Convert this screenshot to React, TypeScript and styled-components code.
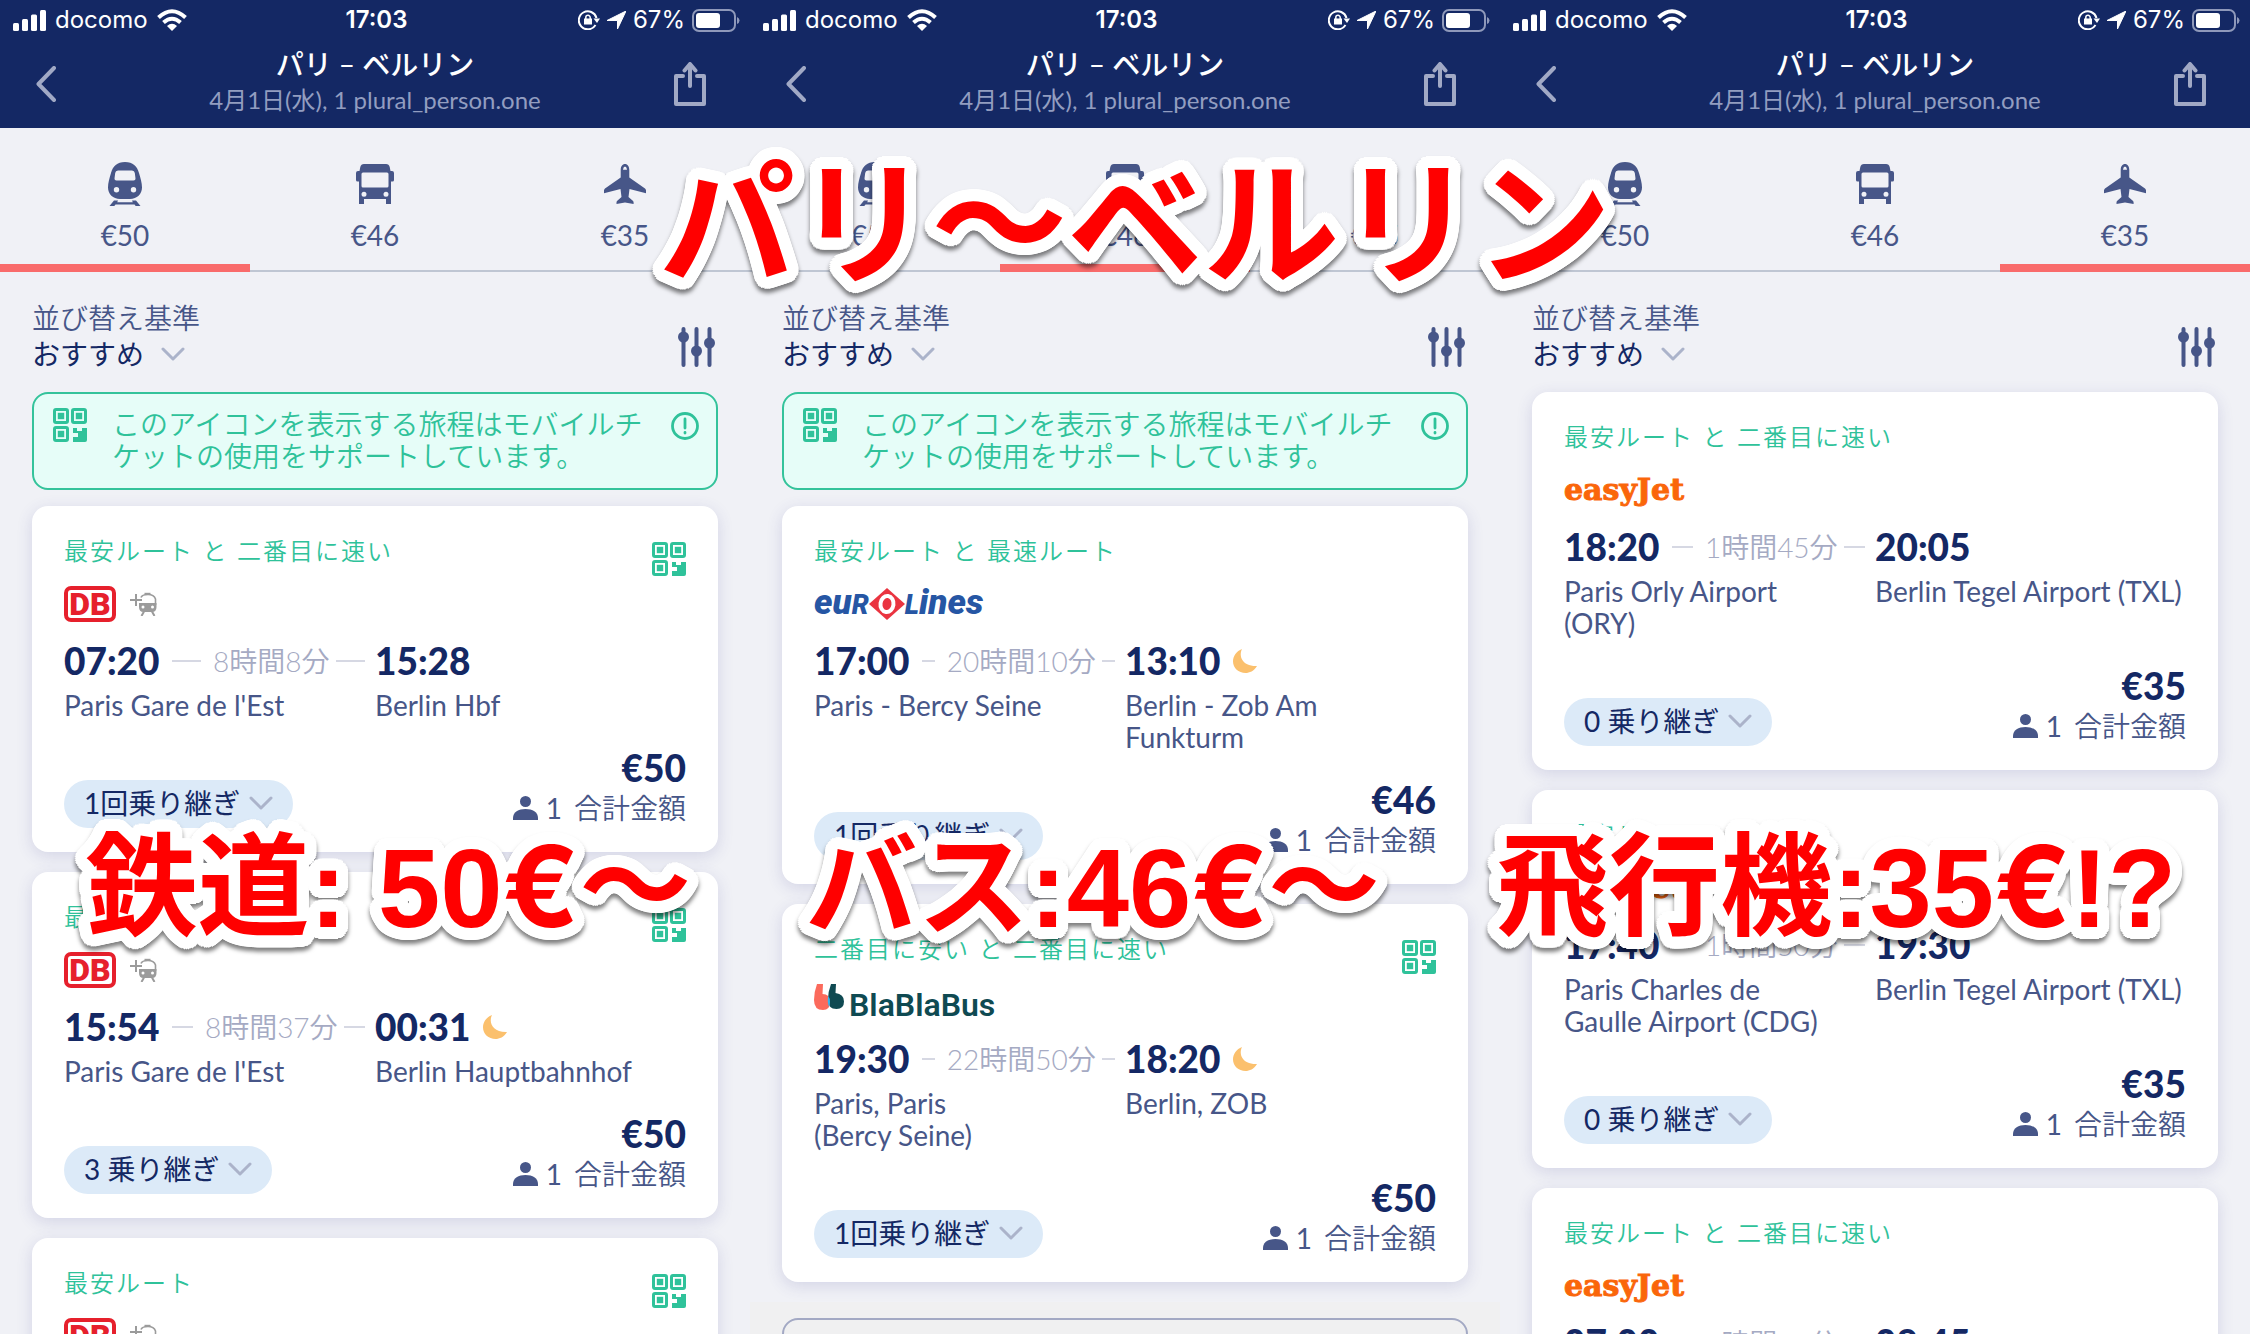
import React, { useId } from 'react';
import styled, { createGlobalStyle } from 'styled-components';

const color = {
  navy: '#142864',
  ink: '#475688',
  muted: '#a5aac3',
  green: '#2fc29a',
  page: '#f0f1f6',
  coral: '#f96b6b',
};

const GlobalStyle = createGlobalStyle`
  * { box-sizing: border-box; }
  body { margin: 0; }
  button, select { font: inherit; color: inherit; background: none; border: 0; padding: 0; margin: 0; }
  svg { display: block; flex: none; }
`;

const Page = styled.div`
  position: relative;
  display: grid;
  grid-template-columns: repeat(3, minmax(0, 1fr));
  height: 100vh;
  overflow: hidden;
  font-family: Lato, 'Noto Sans CJK JP', sans-serif;
  font-size: 28px;
  line-height: 32px;
  color: ${color.ink};
  background: ${color.page};
`;

const Phone = styled.section`
  min-width: 0;
`;

const Header = styled.header`
  height: 128px;
  color: #fff;
  background: ${color.navy};
`;

const StatusBar = styled.div`
  display: grid;
  grid-template-columns: 1fr auto 1fr;
  align-items: center;
  height: 40px;
  padding: 0 10px 0 13px;
  font-family: Inter, sans-serif;
  font-size: 24px;
`;

const StatusGroup = styled.div<{ $end?: boolean }>`
  display: flex;
  align-items: center;
  justify-content: ${(p) => (p.$end ? 'flex-end' : 'flex-start')};
  gap: ${(p) => (p.$end ? '7px' : '9px')};
`;

const Clock = styled.time`
  font-weight: 600;
`;

const NavBar = styled.div`
  display: grid;
  grid-template-columns: 120px 1fr 120px;
  align-items: center;
  height: 88px;
`;

const NavButton = styled.button<{ $back?: boolean }>`
  display: flex;
  justify-content: ${(p) => (p.$back ? 'flex-start' : 'center')};
  align-items: center;
  height: 88px;
  padding-left: ${(p) => (p.$back ? '36px' : '0')};
  color: #a1a9c5;
`;

const Titles = styled.div`
  text-align: center;
`;

const Title = styled.h1`
  margin: 0;
  font-size: 28px;
  line-height: 40px;
  font-weight: 500;
`;

const Subtitle = styled.p`
  margin: 0;
  padding-bottom: 8px;
  font-size: 24px;
  line-height: 32px;
  color: #929dc0;
`;

const Tabs = styled.nav`
  display: grid;
  grid-template-columns: repeat(3, 1fr);
  height: 144px;
  border-bottom: 2px solid #bfc6d3;
`;

const Tab = styled.button<{ $active: boolean }>`
  display: flex;
  flex-direction: column;
  align-items: center;
  gap: 13px;
  height: 144px;
  padding-top: 34px;
  border-bottom: 8px solid ${(p) => (p.$active ? color.coral : 'transparent')};
`;

const TabPrice = styled.span`
  line-height: 32px;
`;

const SortRow = styled.div`
  display: flex;
  justify-content: space-between;
  align-items: center;
  height: 120px;
  padding: 0 32px;
`;

const SortBox = styled.div`
  display: flex;
  flex-direction: column;
  padding-top: 8px;
  line-height: 36px;
`;

const SortLabel = styled.label`
  font-weight: 350;
`;

const SelectWrap = styled.span`
  display: flex;
  align-items: center;
  gap: 16px;
  color: ${color.navy};
`;

const Select = styled.select`
  appearance: none;
  height: 36px;
  line-height: 36px;
`;

const FilterButton = styled.button`
  padding: 30px 3px 0 0;
`;

const Results = styled.main`
  display: flex;
  flex-direction: column;
  gap: 20px;
  padding: 0 32px;
`;

const Notice = styled.aside`
  display: flex;
  align-items: flex-start;
  height: 98px;
  margin-bottom: -4px;
  padding: 14px 17px 0 19px;
  border: 2px solid #34c39b;
  border-radius: 16px;
  color: ${color.green};
  background: #e6fdf8;
`;

const NoticeText = styled.p`
  flex: 1;
  min-width: 0;
  margin: 0;
  padding: 0 20px 0 25px;
  font-weight: 350;
`;

const NoticeInfo = styled.button`
  padding-top: 4px;
`;

const Card = styled.article`
  padding: 28px 32px 24px;
  border-radius: 16px;
  background: #fff;
  box-shadow: 0 4px 16px rgba(60, 60, 150, 0.16);
`;

const CardHead = styled.div`
  display: flex;
  justify-content: space-between;
  align-items: flex-start;
  height: 34px;
`;

const Tag = styled.span`
  font-size: 24px;
  line-height: 34px;
  font-weight: 350;
  letter-spacing: 2px;
  color: ${color.green};
`;

const TicketMark = styled.span`
  padding-top: 8px;
`;

const Carrier = styled.div`
  display: flex;
  align-items: center;
  gap: 14px;
  height: 36px;
  margin-top: 18px;
`;

const Legs = styled.div`
  display: grid;
  grid-template-columns: 1fr 1fr;
  row-gap: 6px;
  margin-top: 17px;
`;

const TimeCell = styled.div`
  display: flex;
  align-items: center;
  gap: 6px;
  height: 44px;
  padding-right: 10px;
`;

const Time = styled.time`
  padding-right: 6px;
  font-size: 37px;
  font-weight: 900;
  color: ${color.navy};
`;

const Rule = styled.span`
  flex: 1;
  height: 2px;
  background: #d6d8e3;
`;

const Duration = styled.span`
  flex: none;
  padding-left: 6px;
  font-weight: 350;
  color: ${color.muted};
`;

const Station = styled.span`
  padding-right: 40px;
  white-space: pre-line;
`;

const ArrivalStation = styled.span`
  white-space: pre-line;
`;

const CardFoot = styled.div`
  display: flex;
  justify-content: space-between;
  align-items: flex-end;
  margin-top: 27px;
`;

const Changes = styled.button`
  display: flex;
  align-items: center;
  gap: 9px;
  height: 48px;
  padding: 0 20px 2px;
  border-radius: 24px;
  color: ${color.navy};
  background: #dceaf8;
`;

const Total = styled.div`
  display: flex;
  flex-direction: column;
  align-items: flex-end;
  line-height: 40px;
`;

const Price = styled.strong`
  font-size: 37px;
  font-weight: 900;
  color: ${color.navy};
`;

const People = styled.span`
  display: flex;
  align-items: center;
  gap: 8px;
`;

const TotalLabel = styled.span`
  padding-left: 4px;
  font-weight: 350;
`;

const MoreArea = styled.div`
  margin: 0 -32px;
  padding: 16px 32px 0;
  background: #f0f0f1;
`;

const MoreButton = styled.button`
  width: 100%;
  height: 96px;
  border: 2px solid #a3a9c4;
  border-radius: 16px;
`;

const DbMark = styled.span`
  display: flex;
  align-items: center;
  justify-content: center;
  width: 52px;
  height: 36px;
  border: 4px solid #e6202c;
  border-radius: 7px;
  font-family: Roboto, sans-serif;
  font-size: 32px;
  line-height: 28px;
  font-weight: 900;
  color: #e6202c;
`;

const EasyMark = styled.span`
  font-family: 'DejaVu Serif', serif;
  font-size: 30px;
  font-weight: 700;
  color: #fa660a;
  -webkit-text-stroke: 1px #fa660a;
`;

const EuroMark = styled.span`
  display: flex;
  align-items: center;
  font-family: Roboto, sans-serif;
  font-size: 35px;
  font-style: italic;
  font-weight: 900;
  color: #2656a4;
`;

const EuroCap = styled.span`
  font-size: 27px;
`;

const BlaMark = styled.span`
  display: flex;
  align-items: flex-start;
  gap: 5px;
  height: 36px;
  font-family: Roboto, sans-serif;
  font-size: 32px;
  line-height: 42px;
  font-weight: 600;
  color: #0f4a52;
`;

const ring = (radius: number, steps: number) =>
  Array.from({ length: steps }, (_, i) => {
    const a = (i / steps) * Math.PI * 2;
    return `${(Math.cos(a) * radius).toFixed(1)}px ${(Math.sin(a) * radius).toFixed(1)}px 0 #fff`;
  }).join(', ');

/* Headline lettering laid over the three phones. */
const CaptionBox = styled.strong<{ $size: number; $left: string; $top: number }>`
  position: absolute;
  left: ${(p) => p.$left};
  top: ${(p) => p.$top}px;
  display: flex;
  align-items: baseline;
  font-family: 'Liberation Sans', 'Noto Sans CJK JP', sans-serif;
  font-size: ${(p) => p.$size}px;
  line-height: ${(p) => p.$size}px;
  font-weight: 700;
  white-space: pre;
  color: #f00;
  filter: drop-shadow(0 4px 2px rgba(0, 0, 0, 0.5));
  pointer-events: none;
`;

/* The white outline sits under every piece, so that no piece covers its neighbour. */
const CaptionPiece = styled.span<{ $euro: boolean }>`
  position: relative;
  display: block;
  font-family: ${(p) => (p.$euro ? 'Inter, sans-serif' : 'inherit')};
  &::before {
    content: attr(data-piece);
    position: absolute;
    left: 0;
    top: 0;
    z-index: -1;
    color: #fff;
    text-shadow: ${ring(12, 40)}, ${ring(6, 12)};
  }
`;

const Caption = ({ size, left, top, text }: { size: number; left: string; top: number; text: string }) => (
  <CaptionBox $size={size} $left={left} $top={top}>
    {text.split(/(€)/).map((piece, i) => (
      <CaptionPiece key={i} $euro={piece === '€'} data-piece={piece}>{piece}</CaptionPiece>
    ))}
  </CaptionBox>
);

const Chevron = () => (
  <svg width="24" height="14" viewBox="0 0 24 14" fill="none" stroke="#abb3ca" strokeWidth="3" strokeLinecap="round" strokeLinejoin="round">
    <path d="M2 2l10 10L22 2" />
  </svg>
);

const QrIcon = () => (
  <svg width="34" height="34" viewBox="0 0 34 34" fill="none" stroke={color.green} strokeWidth="3">
    <rect x="1.5" y="1.5" width="13" height="13" rx="1.5" />
    <rect x="19.5" y="1.5" width="13" height="13" rx="1.5" />
    <rect x="1.5" y="19.5" width="13" height="13" rx="1.5" />
    <g fill={color.green} stroke="none">
      <rect x="4.8" y="4.8" width="6.400" height="6.400" />
      <rect x="22.8" y="4.8" width="6.400" height="6.400" />
      <rect x="4.8" y="22.8" width="6.400" height="6.400" />
      <path d="M20 20h4v3h5v-3h5v12a2 2 0 0 1-2 2H20v-5h5v-4h-5z" />
    </g>
  </svg>
);

const TrainIcon = () => (
  <svg width="34" height="44" viewBox="0 0 34 44" fill={color.ink}>
    <path fillRule="evenodd" d="M17 0C25 0 29 4 31 11c1.500 5 3 10 3 14.500C34 32 29 37 22 37H12C5 37 0 32 0 25.500 0 21 1.500 16 3 11 5 4 9 0 17 0zM10 8.500Q7.500 8.500 7.200 11l-.7 5.500Q6.300 18.500 8.500 18.500h17q2.200 0 2-2L26.800 11q-.3-2.500-2.800-2.500zM8.500 25a2.700 2.700 0 1 0 0 5.400 2.700 2.700 0 0 0 0-5.400zm17 0a2.700 2.700 0 1 0 0 5.400 2.700 2.700 0 0 0 0-5.400z" />
    <path d="M6 38.500h4l-.8 1.700h15.600l-.8-1.700h4l4.500 5.500h-4.800l-1.200-1.500H7.500L6.300 44H1.500z" />
  </svg>
);

const BusIcon = () => (
  <svg width="38" height="44" viewBox="0 0 38 44" fill={color.ink}>
    <path fillRule="evenodd" d="M8 2h22q3 0 3.700 3l.8 4H36q2 0 2 2v7q0 1.500-1.500 1.500H35V42h-5v-5H8v5H3V19.500H1.500Q0 19.500 0 18v-7q0-2 2-2h1.500l.8-4Q5 2 8 2zM7 10.500q-1.500 0-1.500 1.500v12q0 1.500 1.500 1.500h24q1.500 0 1.500-1.500V12q0-1.500-1.500-1.500zM8 29.800a2.500 2.500 0 1 0 0 5 2.500 2.500 0 0 0 0-5zm22 0a2.500 2.500 0 1 0 0 5 2.500 2.500 0 0 0 0-5z" />
  </svg>
);

const PlaneIcon = () => (
  <svg width="42" height="44" viewBox="0 0 42 44" fill={color.ink}>
    <path fillRule="evenodd" d="M21 2c2.600 0 4.300 2.500 4.300 6v7.500L41 26.500q1 .8 1 2v2.700L25.500 27 24.500 35l4.300 3.800q.8.700.8 1.700V42L21 40.500 12.500 42v-1.500q0-1 .8-1.700l4.200-3.800-1-8L0 31.200v-2.700q0-1.200 1-2l15.700-11V8c0-3.500 1.700-6 4.300-6zm0 2.500q-1.800.3-2 3.200h4q-.2-2.900-2-3.200z" />
  </svg>
);

const FilterIcon = () => (
  <svg width="37" height="40" viewBox="0 0 37 40" fill={color.ink} stroke={color.ink} strokeWidth="4" strokeLinecap="round">
    <path d="M5.500 2v36M18.500 2v36M31.500 2v36" />
    <g stroke="none"><circle cx="5.500" cy="10" r="5.500" /><circle cx="18.500" cy="24" r="5.500" /><circle cx="31.500" cy="16" r="5.500" /></g>
  </svg>
);

const InfoIcon = () => (
  <svg width="28" height="28" viewBox="0 0 28 28" fill="none" stroke={color.green} strokeWidth="2.800" strokeLinecap="round">
    <circle cx="14" cy="14" r="12.500" /><path d="M14 7v9M14 20.500v.5" />
  </svg>
);

const PersonIcon = () => (
  <svg width="25" height="24" viewBox="0 0 25 24" fill={color.ink}>
    <ellipse cx="12.500" cy="5.500" rx="5.500" ry="5.500" /><path d="M0 24v-2c0-6 5.500-9 12.500-9S25 16 25 22v2z" />
  </svg>
);

const MoonIcon = () => (
  <svg width="24" height="24" viewBox="0 0 24 24" fill="#fbc06d">
    <path d="M9 0C5.500 7 9 17.500 24 17 21 22 16.500 24 12.500 24 5.500 24 0 19 0 12.500 0 7 3.500 2 9 0z" />
  </svg>
);

const ExtraTrainIcon = () => (
  <svg width="28" height="24" viewBox="0 0 28 24" fill="none" stroke="#9b9b9b" strokeWidth="1.600">
    <path d="M0 8h12M6 2v12" strokeWidth="2" />
    <path d="M11 5.500Q12 2.500 18 2.500t7.500 4.500v6" />
    <path d="M14.500.8h6v2h-6z" fill="#9b9b9b" stroke="none" />
    <path fillRule="evenodd" fill="#9b9b9b" stroke="none" d="M9 11h17.500v4q0 5-4.500 5h-8.500Q9 20 9 15zm4 2.500a1.500 1.500 0 1 0 0 3 1.500 1.500 0 0 0 0-3zm9.500 0a1.500 1.500 0 1 0 0 3 1.500 1.500 0 0 0 0-3z" />
    <path d="M14 19.500L11.500 24M22 19.500l2.500 4.500" strokeWidth="2" />
  </svg>
);

const BackIcon = () => (
  <svg width="20" height="36" viewBox="0 0 20 36" fill="none" stroke="currentColor" strokeWidth="4" strokeLinecap="round" strokeLinejoin="round">
    <path d="M18 2L2.500 18 18 34" />
  </svg>
);

const ShareIcon = () => (
  <svg width="32" height="44" viewBox="0 0 32 44" fill="none" stroke="currentColor" strokeWidth="4" strokeLinecap="round" strokeLinejoin="round">
    <path d="M9 14H2v28h28V14h-7" /><path d="M16 24V3" /><path d="M10.500 8.500L16 2l5.500 6.500" />
  </svg>
);

const SignalIcon = () => (
  <svg width="33" height="21" viewBox="0 0 33 21" fill="#fff">
    <rect y="13" width="6" height="8" rx="1.500" /><rect x="9" y="9" width="6" height="12" rx="1.500" />
    <rect x="18" y="4.500" width="6" height="16.500" rx="1.500" /><rect x="27" width="6" height="21" rx="1.500" />
  </svg>
);

const WifiIcon = () => (
  <svg width="30" height="22" viewBox="0 0 30 22" fill="none" stroke="#fff" strokeWidth="4">
    <path d="M1.500 8.500Q15-4 28.500 8.500" /><path d="M6.500 13.500q8.500-7.500 17 0" />
    <path d="M10 17q5-4.500 10 0l-5 5z" fill="#fff" stroke="none" />
  </svg>
);

const LockIcon = () => (
  <svg width="22" height="20" viewBox="0 0 22 20" fill="none" stroke="#fff" strokeWidth="2">
    <path d="M17.500 15A9 9 0 1 1 18.500 8" /><path d="M15.500 8.500h6.500L19 13z" fill="#fff" stroke="none" />
    <rect x="6" y="8.500" width="8" height="6" fill="#fff" stroke="none" /><path d="M7.800 9V7.500a2.200 2.200 0 0 1 4.400 0V9" strokeWidth="1.500" />
  </svg>
);

const ArrowIcon = () => (
  <svg width="19" height="18" viewBox="0 0 19 18" fill="#fff"><path d="M19 0L10.500 18V9.500H0z" stroke="#fff" /></svg>
);

const BatteryIcon = () => (
  <svg width="48" height="23" viewBox="0 0 48 23" fill="none">
    <rect x="1" y="1" width="42" height="21" rx="6" stroke="#8f99ba" strokeWidth="2" />
    <rect x="4" y="4" width="24" height="15" rx="3" fill="#fff" />
    <path d="M45 8q2.500 1 2.500 3.500T45 15z" fill="#8f99ba" />
  </svg>
);

const EuroDiamond = () => (
  <svg width="36" height="32" viewBox="0 0 36 32">
    <path d="M18 0L36 16 18 32 0 16z" fill="#ea3440" />
    <ellipse cx="18" cy="16" rx="6.500" ry="8" fill="none" stroke="#fff" strokeWidth="4" transform="rotate(8 18 16)" />
  </svg>
);

const BlaQuote = () => (
  <svg width="30" height="26" viewBox="0 0 30 26">
    <path d="M3 0h6L8.500 10Q16 10 16 18t-7 8Q0 26 0 16 0 8 3 0z" fill="#fb6a5c" />
    <path d="M17 0h5l-.5 9Q30 10 30 17.500T22.500 25Q14 25 14 15q0-7 3-15z" fill="#0f4a52" />
    <path d="M14.300 12Q16 14 16 18t-1 5q-2-5-.7-11z" fill="#32b8f0" />
  </svg>
);

type CarrierName = 'db' | 'easyjet' | 'eurolines' | 'blablabus';

interface Trip {
  tag: string;
  carrier: CarrierName;
  depart: string;
  arrive: string;
  duration: string;
  from: string;
  to: string;
  price: string;
  changes: string;
  mobile?: boolean;
  overnight?: boolean;
}

const rail: Trip[] = [
  { tag: '最安ルート と 二番目に速い', carrier: 'db', depart: '07:20', arrive: '15:28', duration: '8時間8分', from: "Paris Gare de l'Est", to: 'Berlin Hbf', price: '€50', changes: '1回乗り継ぎ', mobile: true },
  { tag: '最安ルート', carrier: 'db', depart: '15:54', arrive: '00:31', duration: '8時間37分', from: "Paris Gare de l'Est", to: 'Berlin Hauptbahnhof', price: '€50', changes: '3 乗り継ぎ', mobile: true, overnight: true },
  { tag: '最安ルート', carrier: 'db', depart: '07:20', arrive: '15:28', duration: '8時間8分', from: "Paris Gare de l'Est", to: 'Berlin Hbf', price: '€50', changes: '1回乗り継ぎ', mobile: true },
];

const coach: Trip[] = [
  { tag: '最安ルート と 最速ルート', carrier: 'eurolines', depart: '17:00', arrive: '13:10', duration: '20時間10分', from: 'Paris - Bercy Seine', to: 'Berlin - Zob Am\nFunkturm', price: '€46', changes: '1回乗り継ぎ', overnight: true },
  { tag: '二番目に安い と 二番目に速い', carrier: 'blablabus', depart: '19:30', arrive: '18:20', duration: '22時間50分', from: 'Paris, Paris\n(Bercy Seine)', to: 'Berlin, ZOB', price: '€50', changes: '1回乗り継ぎ', mobile: true, overnight: true },
];

const air: Trip[] = [
  { tag: '最安ルート と 二番目に速い', carrier: 'easyjet', depart: '18:20', arrive: '20:05', duration: '1時間45分', from: 'Paris Orly Airport\n(ORY)', to: 'Berlin Tegel Airport (TXL)', price: '€35', changes: '0 乗り継ぎ' },
  { tag: '最安ルート', carrier: 'easyjet', depart: '17:40', arrive: '19:30', duration: '1時間50分', from: 'Paris Charles de\nGaulle Airport (CDG)', to: 'Berlin Tegel Airport (TXL)', price: '€35', changes: '0 乗り継ぎ' },
  { tag: '最安ルート と 二番目に速い', carrier: 'easyjet', depart: '07:00', arrive: '08:45', duration: '1時間45分', from: 'Paris Orly Airport\n(ORY)', to: 'Berlin Tegel Airport (TXL)', price: '€35', changes: '0 乗り継ぎ' },
];

const tabs = [
  { name: '鉄道', price: '€50', Icon: TrainIcon },
  { name: 'バス', price: '€46', Icon: BusIcon },
  { name: '飛行機', price: '€35', Icon: PlaneIcon },
];

const CarrierLogo = ({ name }: { name: CarrierName }) => {
  switch (name) {
    case 'db':
      return (<><DbMark>DB</DbMark><ExtraTrainIcon /></>);
    case 'easyjet':
      return <EasyMark>easyJet</EasyMark>;
    case 'eurolines':
      return (
        <EuroMark>
          <span>eu<EuroCap>R</EuroCap></span>
          <EuroDiamond />
          <span><EuroCap>L</EuroCap>ines</span>
        </EuroMark>
      );
    default:
      return (<BlaMark><BlaQuote />BlaBlaBus</BlaMark>);
  }
};

const TripCard = ({ trip }: { trip: Trip }) => (
  <Card>
    <CardHead>
      <Tag>{trip.tag}</Tag>
      {trip.mobile && <TicketMark><QrIcon /></TicketMark>}
    </CardHead>
    <Carrier><CarrierLogo name={trip.carrier} /></Carrier>
    <Legs>
      <TimeCell>
        <Time>{trip.depart}</Time>
        <Rule />
        <Duration>{trip.duration}</Duration>
        <Rule />
      </TimeCell>
      <TimeCell>
        <Time>{trip.arrive}</Time>
        {trip.overnight && <MoonIcon />}
      </TimeCell>
      <Station>{trip.from}</Station>
      <ArrivalStation>{trip.to}</ArrivalStation>
    </Legs>
    <CardFoot>
      <Changes>{trip.changes}<Chevron /></Changes>
      <Total>
        <Price>{trip.price}</Price>
        <People><PersonIcon />1<TotalLabel>合計金額</TotalLabel></People>
      </Total>
    </CardFoot>
  </Card>
);

const PhoneScreen = ({ active, trips, notice, more }: { active: number; trips: Trip[]; notice?: boolean; more?: boolean }) => {
  const sortId = useId();
  return (
    <Phone>
      <Header>
        <StatusBar>
          <StatusGroup><SignalIcon />docomo<WifiIcon /></StatusGroup>
          <Clock>17:03</Clock>
          <StatusGroup $end><LockIcon /><ArrowIcon />67%<BatteryIcon /></StatusGroup>
        </StatusBar>
        <NavBar>
          <NavButton $back aria-label="戻る"><BackIcon /></NavButton>
          <Titles>
            <Title>パリ – ベルリン</Title>
            <Subtitle>4月1日(水), 1 plural_person.one</Subtitle>
          </Titles>
          <NavButton aria-label="共有"><ShareIcon /></NavButton>
        </NavBar>
      </Header>
      <Tabs>
        {tabs.map(({ name, price, Icon }, i) => (
          <Tab key={name} aria-label={name} $active={i === active}><Icon /><TabPrice>{price}</TabPrice></Tab>
        ))}
      </Tabs>
      <SortRow>
        <SortBox>
          <SortLabel htmlFor={sortId}>並び替え基準</SortLabel>
          <SelectWrap>
            <Select id={sortId}><option>おすすめ</option></Select>
            <Chevron />
          </SelectWrap>
        </SortBox>
        <FilterButton aria-label="フィルター"><FilterIcon /></FilterButton>
      </SortRow>
      <Results>
        {notice && (
          <Notice>
            <QrIcon />
            <NoticeText>このアイコンを表示する旅程はモバイルチケットの使用をサポートしています。</NoticeText>
            <NoticeInfo aria-label="詳細"><InfoIcon /></NoticeInfo>
          </Notice>
        )}
        {trips.map((trip, i) => <TripCard key={i} trip={trip} />)}
        {more && <MoreArea><MoreButton aria-label="さらに表示" /></MoreArea>}
      </Results>
    </Phone>
  );
};

export default function App() {
  return (
    <>
      <GlobalStyle />
      <Page>
        <PhoneScreen active={0} trips={rail} notice />
        <PhoneScreen active={1} trips={coach} notice more />
        <PhoneScreen active={2} trips={air} />
        <Caption size={136} left="29.3%" top={159} text="パリ〜ベルリン" />
        <Caption size={112} left="3.8%" top={830} text="鉄道: 50€〜" />
        <Caption size={112} left="35.8%" top={830} text="バス:46€〜" />
        <Caption size={112} left="66.5%" top={830} text="飛行機:35€!?" />
      </Page>
    </>
  );
}
